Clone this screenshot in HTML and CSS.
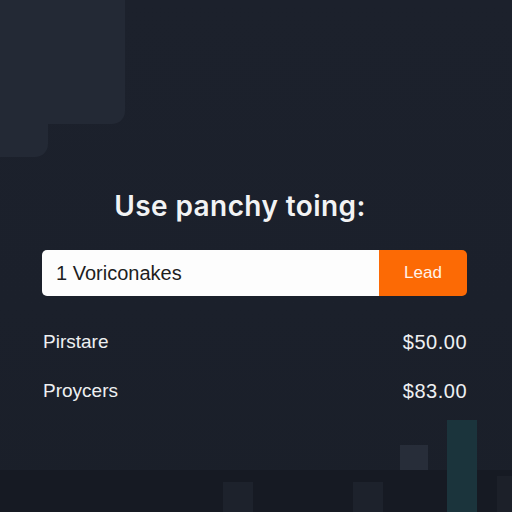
FILE: index.html
```html
<!DOCTYPE html>
<html lang="en">
<head>
  <meta charset="UTF-8" />
  <meta name="viewport" content="width=device-width, initial-scale=1.0"/>
  <title>Use panchy toing</title>
  <link rel="stylesheet" href="styles.css">
</head>
<body>
  <div class="screen">
    <!-- corner decoration -->
    <div class="corner corner-wide"></div>
    <div class="corner corner-tall"></div>

    <main class="panel">
      <h1>Use panchy toing:</h1>

      <form class="search" onsubmit="return false">
        <input type="text" value="1 Voriconakes">
        <button type="submit">Lead</button>
      </form>

      <ul class="prices">
        <li><span>Pirstare</span><span class="amount">$50.00</span></li>
        <li><span>Proycers</span><span class="amount">$83.00</span></li>
      </ul>
    </main>

    <!-- faint bar chart along the bottom -->
    <div class="chart">
      <div class="band"></div>
      <div class="bar bar-low" style="left: 223px;"></div>
      <div class="bar bar-low" style="left: 353px;"></div>
      <div class="bar bar-grey" style="left: 400px;"></div>
      <div class="bar bar-teal" style="left: 447px;"></div>
      <div class="bar bar-edge" style="left: 497px;"></div>
    </div>
  </div>
</body>
</html>
```

FILE: styles.css
```css
/* Global Styling */
* {
  box-sizing: border-box;
}

body {
  margin: 0;
  background: #1b202b;
  font-family: 'Liberation Sans', Arial, sans-serif;
}

.screen {
  position: relative;
  width: 512px;
  height: 512px;
  overflow: hidden;
  background: linear-gradient(180deg, #1c212c 0%, #1b202b 60%, #1a1f29 100%);
}

.corner {
  position: absolute;
  top: 0;
  left: 0;
  background: #232935;
  border-bottom-right-radius: 13px;
}

.corner-wide {
  width: 125px;
  height: 124px;
}

.corner-tall {
  width: 48px;
  height: 157px;
}

.panel {
  position: relative;
  z-index: 1;
  padding: 188px 45px 0 42px;
}

h1 {
  margin: 0 0 26px;
  padding-right: 29px;
  text-align: center;
  font-family: 'Inter', 'Liberation Sans', sans-serif;
  font-weight: 600;
  font-size: 28px;
  letter-spacing: 0.4px;
  line-height: 36px;
  color: #f2f3f4;
}

.search {
  display: flex;
  height: 46px;
  border-radius: 5px;
  overflow: hidden;
}

.search input {
  flex: 1;
  min-width: 0;
  border: none;
  outline: none;
  padding: 0 14px;
  font-family: 'Liberation Sans', Arial, sans-serif;
  font-size: 20px;
  color: #1e1e1e;
  background: #fdfdfd;
}

.search button {
  width: 88px;
  border: none;
  background: #fc6a05;
  color: #fff3ea;
  font-family: 'Liberation Sans', Arial, sans-serif;
  font-size: 17px;
  cursor: pointer;
}

.prices {
  list-style: none;
  margin: 21px 0 0;
  padding: 0 0 0 1px;
}

.prices li {
  display: flex;
  justify-content: space-between;
  align-items: center;
  height: 49px;
  font-size: 19px;
  line-height: 26px;
  color: #eef0f2;
}

.amount {
  font-size: 20px;
  letter-spacing: 0.5px;
}

.chart {
  position: absolute;
  left: 0;
  right: 0;
  bottom: 0;
  height: 92px;
}

.band {
  position: absolute;
  left: 0;
  right: 0;
  bottom: 0;
  height: 42px;
  background: #161a23;
}

.bar {
  position: absolute;
  bottom: 0;
  width: 30px;
}

.bar-low {
  height: 30px;
  background: #1d222c;
}

.bar-grey {
  bottom: 42px;
  width: 28px;
  height: 25px;
  background: #272d39;
}

.bar-teal {
  height: 92px;
  background: #1b343c;
}

.bar-edge {
  height: 36px;
  background: #1c2029;
}
```
